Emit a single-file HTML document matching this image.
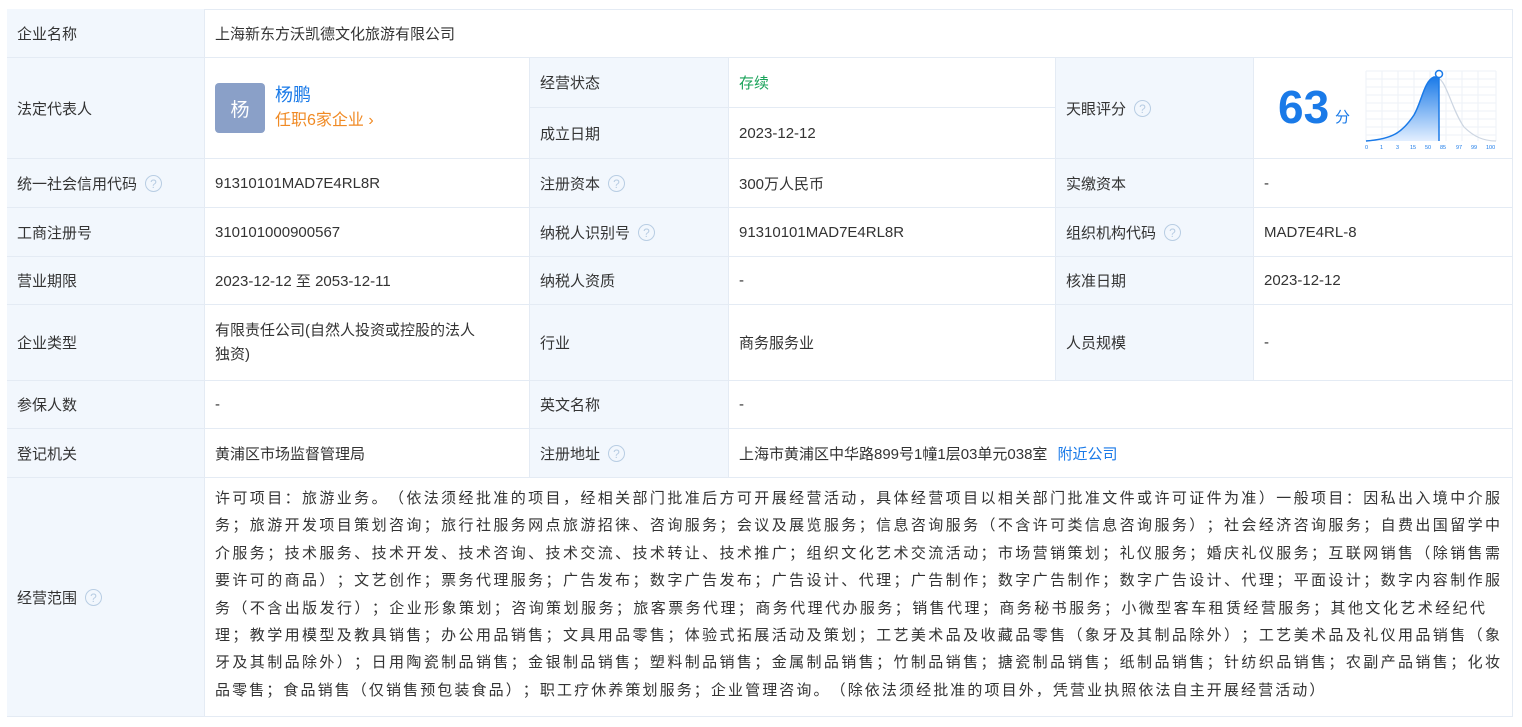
<!DOCTYPE html>
<html><head><meta charset="utf-8"><style>
body{margin:0;background:#fff;font-family:"Liberation Sans","Noto Sans CJK SC",sans-serif;font-size:15px;color:#333;text-spacing-trim:space-all;}
.c{position:absolute;box-sizing:border-box;border-right:1px solid #e4ebf4;border-bottom:1px solid #e4ebf4;padding:0 10px;display:flex;align-items:center;}
.l{background:#f2f7fd;}
.q{display:inline-block;width:17px;height:17px;border:1px solid #b8cde3;border-radius:50%;color:#b8cde3;font-size:12px;line-height:16px;text-align:center;margin-left:8px;box-sizing:border-box;}
.frame{position:absolute;left:7px;top:9px;width:1506px;height:708px;border-left:1px solid #e4ebf4;border-top:1px solid #e4ebf4;box-sizing:border-box;}
.scope div{width:1285px;white-space:nowrap;line-height:27.4px;text-align:justify;text-align-last:justify;overflow:hidden;}
.scope div.last{text-align-last:left;letter-spacing:2.1px;}
</style></head><body>
<div class="frame"></div>
<div class="c l" style="left:7px;top:9px;width:198px;height:49px">企业名称</div>
<div class="c" style="left:205px;top:9px;width:1308px;height:49px">上海新东方沃凯德文化旅游有限公司</div>

<div class="c l" style="left:7px;top:58px;width:198px;height:101px">法定代表人</div>
<div class="c" style="left:205px;top:58px;width:325px;height:101px">
 <div style="width:50px;height:50px;background:#8aa0c8;border-radius:4px;color:#fff;font-size:19px;display:flex;align-items:center;justify-content:center;margin-right:10px">杨</div>
 <div><div style="color:#1a7ae8;font-size:18px;line-height:26px">杨鹏</div><div style="color:#f08a24;font-size:16px;line-height:26px">任职6家企业 ›</div></div>
</div>
<div class="c l" style="left:530px;top:58px;width:199px;height:50px">经营状态</div>
<div class="c" style="left:729px;top:58px;width:327px;height:50px;color:#1aa35a">存续</div>
<div class="c l" style="left:530px;top:108px;width:199px;height:51px">成立日期</div>
<div class="c" style="left:729px;top:108px;width:327px;height:51px">2023-12-12</div>
<div class="c l" style="left:1056px;top:58px;width:198px;height:101px">天眼评分<span class="q">?</span></div>
<div class="c" style="left:1254px;top:58px;width:259px;height:101px">
 <span style="position:absolute;left:24px;top:22px;font-size:46px;font-weight:bold;color:#1a7ae8;line-height:54px">63</span>
 <span style="position:absolute;left:81px;top:48px;font-size:15px;color:#1a7ae8">分</span>
 <svg style="position:absolute;left:108px;top:9px" width="140" height="84" viewBox="0 0 140 84">
  <defs><linearGradient id="g" x1="0" y1="0" x2="0" y2="1"><stop offset="0" stop-color="#1a7ae8"/><stop offset="1" stop-color="#e3efff"/></linearGradient></defs>
  <g stroke="#eef2f7" stroke-width="1">
   <path d="M4 4H134M4 12H134M4 20H134M4 28H134M4 36H134M4 44H134M4 52H134M4 60H134M4 68H134"/>
   <path d="M4 4V74M20 4V74M36 4V74M52 4V74M68 4V74M84 4V74M100 4V74M116 4V74M134 4V74"/>
  </g>
  <path d="M4 74C30 72 40 66 52 48C60 34 62 14 72 10C84 8 88 40 102 60C112 70 122 74 134 74" fill="none" stroke="#cdd6e2" stroke-width="1.2"/>
  <path d="M4 74C30 72 40 66 52 48C60 34 62 14 72 10C74 10 75 10 77 10V74Z" fill="url(#g)"/>
  <path d="M4 74C30 72 40 66 52 48C60 34 62 14 72 10C74 10 75 10 77 10" fill="none" stroke="#1a7ae8" stroke-width="1.5"/>
  <path d="M77 10V74" stroke="#1a7ae8" stroke-width="1.5"/>
  <circle cx="77" cy="7" r="3.5" fill="#fff" stroke="#1a7ae8" stroke-width="1.5"/>
  <g font-size="5.5" fill="#1a7ae8" font-family="Liberation Sans"><text x="3" y="82">0</text><text x="18" y="82">1</text><text x="34" y="82">3</text><text x="48" y="82">15</text><text x="63" y="82">50</text><text x="78" y="82">85</text><text x="94" y="82">97</text><text x="109" y="82">99</text><text x="124" y="82">100</text></g>
 </svg>
</div>

<div class="c l" style="left:7px;top:159px;width:198px;height:49px">统一社会信用代码<span class="q">?</span></div>
<div class="c" style="left:205px;top:159px;width:325px;height:49px">91310101MAD7E4RL8R</div>
<div class="c l" style="left:530px;top:159px;width:199px;height:49px">注册资本<span class="q">?</span></div>
<div class="c" style="left:729px;top:159px;width:327px;height:49px">300万人民币</div>
<div class="c l" style="left:1056px;top:159px;width:198px;height:49px">实缴资本</div>
<div class="c" style="left:1254px;top:159px;width:259px;height:49px">-</div>

<div class="c l" style="left:7px;top:208px;width:198px;height:49px">工商注册号</div>
<div class="c" style="left:205px;top:208px;width:325px;height:49px">310101000900567</div>
<div class="c l" style="left:530px;top:208px;width:199px;height:49px">纳税人识别号<span class="q">?</span></div>
<div class="c" style="left:729px;top:208px;width:327px;height:49px">91310101MAD7E4RL8R</div>
<div class="c l" style="left:1056px;top:208px;width:198px;height:49px">组织机构代码<span class="q">?</span></div>
<div class="c" style="left:1254px;top:208px;width:259px;height:49px">MAD7E4RL-8</div>

<div class="c l" style="left:7px;top:257px;width:198px;height:48px">营业期限</div>
<div class="c" style="left:205px;top:257px;width:325px;height:48px">2023-12-12 至 2053-12-11</div>
<div class="c l" style="left:530px;top:257px;width:199px;height:48px">纳税人资质</div>
<div class="c" style="left:729px;top:257px;width:327px;height:48px">-</div>
<div class="c l" style="left:1056px;top:257px;width:198px;height:48px">核准日期</div>
<div class="c" style="left:1254px;top:257px;width:259px;height:48px">2023-12-12</div>

<div class="c l" style="left:7px;top:305px;width:198px;height:76px">企业类型</div>
<div class="c" style="left:205px;top:305px;width:325px;height:76px;line-height:24px"><div>有限责任公司(自然人投资或控股的法人<br>独资)</div></div>
<div class="c l" style="left:530px;top:305px;width:199px;height:76px">行业</div>
<div class="c" style="left:729px;top:305px;width:327px;height:76px">商务服务业</div>
<div class="c l" style="left:1056px;top:305px;width:198px;height:76px">人员规模</div>
<div class="c" style="left:1254px;top:305px;width:259px;height:76px">-</div>

<div class="c l" style="left:7px;top:381px;width:198px;height:48px">参保人数</div>
<div class="c" style="left:205px;top:381px;width:325px;height:48px">-</div>
<div class="c l" style="left:530px;top:381px;width:199px;height:48px">英文名称</div>
<div class="c" style="left:729px;top:381px;width:784px;height:48px">-</div>

<div class="c l" style="left:7px;top:429px;width:198px;height:49px">登记机关</div>
<div class="c" style="left:205px;top:429px;width:325px;height:49px">黄浦区市场监督管理局</div>
<div class="c l" style="left:530px;top:429px;width:199px;height:49px">注册地址<span class="q">?</span></div>
<div class="c" style="left:729px;top:429px;width:784px;height:49px">上海市黄浦区中华路899号1幢1层03单元038室<span style="color:#1a7ae8;margin-left:10px">附近公司</span></div>

<div class="c l" style="left:7px;top:478px;width:198px;height:239px">经营范围<span class="q">?</span></div>
<div class="c scope" style="left:205px;top:478px;width:1308px;height:239px;display:block;padding-top:7px">
<div>许可项目：旅游业务。（依法须经批准的项目，经相关部门批准后方可开展经营活动，具体经营项目以相关部门批准文件或许可证件为准）一般项目：因私出入境中介服</div>
<div>务；旅游开发项目策划咨询；旅行社服务网点旅游招徕、咨询服务；会议及展览服务；信息咨询服务（不含许可类信息咨询服务）；社会经济咨询服务；自费出国留学中</div>
<div>介服务；技术服务、技术开发、技术咨询、技术交流、技术转让、技术推广；组织文化艺术交流活动；市场营销策划；礼仪服务；婚庆礼仪服务；互联网销售（除销售需</div>
<div>要许可的商品）；文艺创作；票务代理服务；广告发布；数字广告发布；广告设计、代理；广告制作；数字广告制作；数字广告设计、代理；平面设计；数字内容制作服</div>
<div style="width:1270px">务（不含出版发行）；企业形象策划；咨询策划服务；旅客票务代理；商务代理代办服务；销售代理；商务秘书服务；小微型客车租赁经营服务；其他文化艺术经纪代</div>
<div>理；教学用模型及教具销售；办公用品销售；文具用品零售；体验式拓展活动及策划；工艺美术品及收藏品零售（象牙及其制品除外）；工艺美术品及礼仪用品销售（象</div>
<div>牙及其制品除外）；日用陶瓷制品销售；金银制品销售；塑料制品销售；金属制品销售；竹制品销售；搪瓷制品销售；纸制品销售；针纺织品销售；农副产品销售；化妆</div>
<div class="last">品零售；食品销售（仅销售预包装食品）；职工疗休养策划服务；企业管理咨询。（除依法须经批准的项目外，凭营业执照依法自主开展经营活动）</div>
</div>
</body></html>
